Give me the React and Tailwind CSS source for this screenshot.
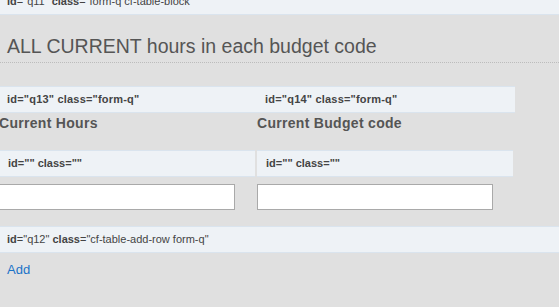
import React from "react";

const font = { fontFamily: '"Liberation Sans", Arial, sans-serif' };

function QBar({ id, cls, className = "" }) {
  return (
    <div
      className={`h-[27px] flex items-center border-y border-[#dae4ee] bg-[#eef2f6] text-[11px] text-[#444] ${className}`}
    >
      <span className="font-bold">id</span>
      <span>="{id}"&nbsp;</span>
      <span className="font-bold">class</span>
      <span>="{cls}"</span>
    </div>
  );
}

function BoldBar({ text, className = "" }) {
  return (
    <div
      className={`h-[27px] flex items-center border-y border-[#dae4ee] bg-[#eef2f6] text-[11px] font-bold text-[#444] ${className}`}
    >
      {text}
    </div>
  );
}

function Column({ qid, label }) {
  return (
    <div className="w-[258px] flex flex-col">
      <BoldBar text={`id="${qid}" class="form-q"`} className="pl-[8px] tracking-[0.2px]" />
      <div className="mt-[2px] text-[14px] leading-[17px] font-bold text-[#555] tracking-[0.3px]">
        {label}
      </div>
      <BoldBar text={`id="" class=""`} className="mt-[18px] w-[256px] pl-[9px]" />
      <input
        type="text"
        className="mt-[7px] w-[236px] h-[26px] border border-[#a9a9a9] bg-white outline-none"
      />
    </div>
  );
}

export default function App() {
  return (
    <div className="min-h-screen bg-[#e0e0e0] overflow-hidden" style={font}>
      {/* previous block, scrolled off the top */}
      <QBar id="q11" cls="form-q cf-table-block" className="-mt-[12px] px-[7px]" />

      {/* section heading */}
      <div className="pt-[19px] pb-[4px] border-b border-dotted border-[#bcbcbc]">
        <h2 className="px-[7px] text-[19.5px] leading-[24px] text-[#555]">
          ALL CURRENT hours in each budget code
        </h2>
      </div>

      {/* two question columns */}
      <div className="mt-[23px] -ml-[1px] flex">
        <Column qid="q13" label="Current Hours" />
        <Column qid="q14" label="Current Budget code" />
      </div>

      {/* add row */}
      <QBar id="q12" cls="cf-table-add-row form-q" className="mt-[16px] px-[7px]" />
      <div className="mt-[4px] px-[7px]">
        <a href="#" className="text-[13px] leading-[16px] text-[#1a73c8]">
          Add
        </a>
      </div>
    </div>
  );
}
